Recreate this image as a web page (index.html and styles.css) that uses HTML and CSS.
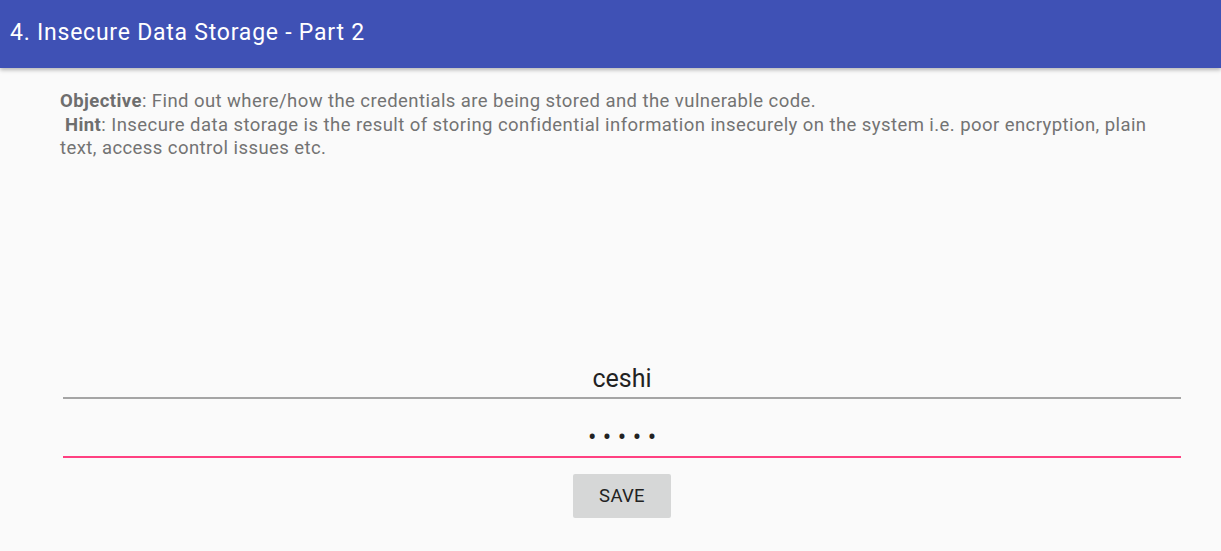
FILE: index.html
```html
<!DOCTYPE html>
<html>
<head>
<meta charset="utf-8">
<link rel="stylesheet" href="styles.css">
</head>
<body>
<header class="appbar"><h1 class="title">4. Insecure Data Storage - Part 2</h1></header>
<main class="content">
  <div class="desc">
    <p class="line"><b>Objective</b>: Find out where/how the credentials are being stored and the vulnerable code.</p>
    <p class="line hint"><b>Hint</b>: Insecure data storage is the result of storing confidential information insecurely on the system i.e. poor encryption, plain text, access control issues etc.</p>
  </div>
  <div class="form">
    <div class="field"><span class="value">ceshi</span></div>
    <div class="field focused"><span class="value dots">•••••</span></div>
    <button class="save">SAVE</button>
  </div>
</main>
</body>
</html>
```
FILE: styles.css
```css
html, body { margin: 0; padding: 0; }
body {
  width: 1221px; height: 551px; overflow: hidden;
  background: #fafafa;
  font-family: Roboto, "Noto Sans", sans-serif;
}
.appbar {
  height: 68px;
  background: #3f51b5;
  box-shadow: 0 2px 4px rgba(0,0,0,0.28);
  display: flex; align-items: center;
  padding-left: 10px;
  position: relative; z-index: 1;
}
.title {
  margin: 0; margin-top: -4px;
  font-weight: 400; font-size: 23px; color: #fff;
  letter-spacing: 0.77px;
}
.desc {
  margin: 22px 60px 0 60px;
  width: 1100px;
  font-size: 18.5px; line-height: 23.5px; color: #737373;
  letter-spacing: 0.43px;
}
.line { margin: 0; }
.hint { text-indent: 5px; }
.desc b { font-weight: 700; color: #6e6e6e; }
.form {
  margin: 182px 40px 0 63px;
  display: flex; flex-direction: column; align-items: center;
}
.field {
  width: 1118px; height: 56px;
  border-bottom: 2px solid #a5a5a5;
  display: flex; align-items: flex-end; justify-content: center;
  box-sizing: border-box;
  padding-bottom: 4px;
}
.field + .field { height: 59px; }
.field.focused { border-bottom-color: #ff4081; }
.value { font-size: 25px; color: #222; line-height: 28px; }
.dots { letter-spacing: 6.5px; font-size: 25px; margin-right: -6.5px; }
.save {
  margin-top: 16px;
  width: 98px; height: 44px;
  border: none; border-radius: 2px;
  background: #d6d7d7;
  font-family: Roboto, sans-serif; font-size: 18.5px; color: #222;
  letter-spacing: 0.3px;
  padding: 0;
}
```
